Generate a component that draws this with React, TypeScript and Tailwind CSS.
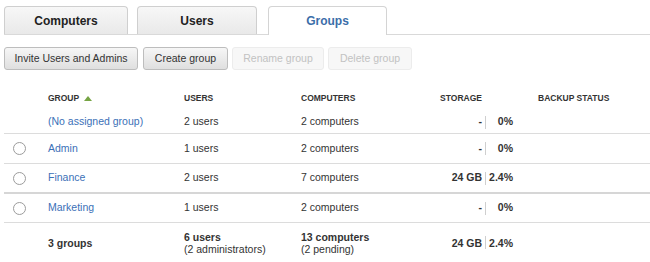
import React from "react";

type Row = {
  name: string;
  users: string;
  computers: string;
  storage: string;
  percent: string;
  radio: boolean;
  h: string;
  border: string;
};

const rows: Row[] = [
  { name: "(No assigned group)", users: "2 users", computers: "2 computers", storage: "-", percent: "0%", radio: false, h: "h-[23px]", border: "border-b border-[#dcdcdc]" },
  { name: "Admin", users: "1 users", computers: "2 computers", storage: "-", percent: "0%", radio: true, h: "h-[30px]", border: "border-b border-[#dcdcdc]" },
  { name: "Finance", users: "2 users", computers: "7 computers", storage: "24 GB", percent: "2.4%", radio: true, h: "h-[30px]", border: "border-b-2 border-[#d6d6d6]" },
  { name: "Marketing", users: "1 users", computers: "2 computers", storage: "-", percent: "0%", radio: true, h: "h-[29px]", border: "border-b border-[#dcdcdc]" },
];

const cols = "grid grid-cols-[44px_136px_117px_119px_66px_27px_1fr] items-center";

function Storage({ value }: { value: string }) {
  return (
    <div className="flex items-center justify-end font-bold">
      <span>{value}</span>
      <span className="ml-[3px] w-px h-[13px] bg-[#cfcfcf]" />
    </div>
  );
}

export default function App() {
  return (
    <div className="w-[650px] h-[262px] overflow-hidden bg-white text-[#333] font-['Liberation_Sans',Arial,sans-serif]">
      {/* tabs */}
      <div className="ml-[4px] pt-[6px] flex items-end border-b border-[#d9d9d9] h-[35px]">
        <div className="w-[124px] h-[28px] flex items-center justify-center rounded-t-[4px] border-t border-x border-[#cfcfcf] bg-gradient-to-b from-[#f7f7f7] to-[#e9e9e9] text-[12px] font-bold text-[#222]">
          Computers
        </div>
        <div className="ml-[9px] w-[120px] h-[28px] flex items-center justify-center rounded-t-[4px] border-t border-x border-[#cfcfcf] bg-gradient-to-b from-[#f7f7f7] to-[#e9e9e9] text-[12px] font-bold text-[#222]">
          Users
        </div>
        <div className="ml-[11px] w-[119px] h-[29px] -mb-px pb-px flex items-center justify-center rounded-t-[4px] border-t border-x border-[#d4d4d4] bg-white text-[12px] font-bold text-[#3b6ea9]">
          Groups
        </div>
      </div>

      {/* actions */}
      <div className="ml-[4px] mt-[12px] flex items-center text-[10.5px]">
        <button className="w-[134px] h-[23px] rounded-[3px] border border-[#bdbdbd] bg-gradient-to-b from-[#f6f6f6] to-[#dfdfdf] text-[#333]">
          Invite Users and Admins
        </button>
        <button className="ml-[5px] w-[85px] h-[23px] rounded-[3px] border border-[#bdbdbd] bg-gradient-to-b from-[#f6f6f6] to-[#dfdfdf] text-[#333]">
          Create group
        </button>
        <button className="ml-[4px] w-[92px] h-[23px] rounded-[3px] border border-[#ececec] bg-[#f7f7f7] text-[#c2c2c2]">
          Rename group
        </button>
        <button className="ml-[4px] w-[84px] h-[23px] rounded-[3px] border border-[#ececec] bg-[#f7f7f7] text-[#c2c2c2]">
          Delete group
        </button>
      </div>

      {/* table */}
      <div className="ml-[4px] mt-[16px] text-[10.5px]">
        <div className={`${cols} h-[25px] text-[8.5px] font-bold text-[#333]`}>
          <div />
          <div className="flex items-center">
            GROUP
            <svg className="ml-[5px]" width="8" height="5" viewBox="0 0 8 5">
              <polygon points="0,5 4,0 8,5" fill="#76a444" />
            </svg>
          </div>
          <div>USERS</div>
          <div>COMPUTERS</div>
          <div className="text-right pr-[4px]">STORAGE</div>
          <div />
          <div className="pl-[25px]">BACKUP STATUS</div>
        </div>

        {rows.map((r) => (
          <div key={r.name} className={`${cols} ${r.h} ${r.border}`}>
            <div>
              {r.radio && (
                <span className="ml-[9px] block w-[13px] h-[13px] rounded-full border border-[#9c9c9c] bg-white" />
              )}
            </div>
            <div className="text-[#3b70b7]">{r.name}</div>
            <div>{r.users}</div>
            <div>{r.computers}</div>
            <Storage value={r.storage} />
            <div className="text-right font-bold">{r.percent}</div>
            <div />
          </div>
        ))}

        <div className={`${cols} h-[39px] leading-[12px]`}>
          <div />
          <div className="font-bold">3 groups</div>
          <div>
            <div className="font-bold">6 users</div>
            <div>(2 administrators)</div>
          </div>
          <div>
            <div className="font-bold">13 computers</div>
            <div>(2 pending)</div>
          </div>
          <Storage value="24 GB" />
          <div className="text-right font-bold">2.4%</div>
          <div />
        </div>
      </div>
    </div>
  );
}
